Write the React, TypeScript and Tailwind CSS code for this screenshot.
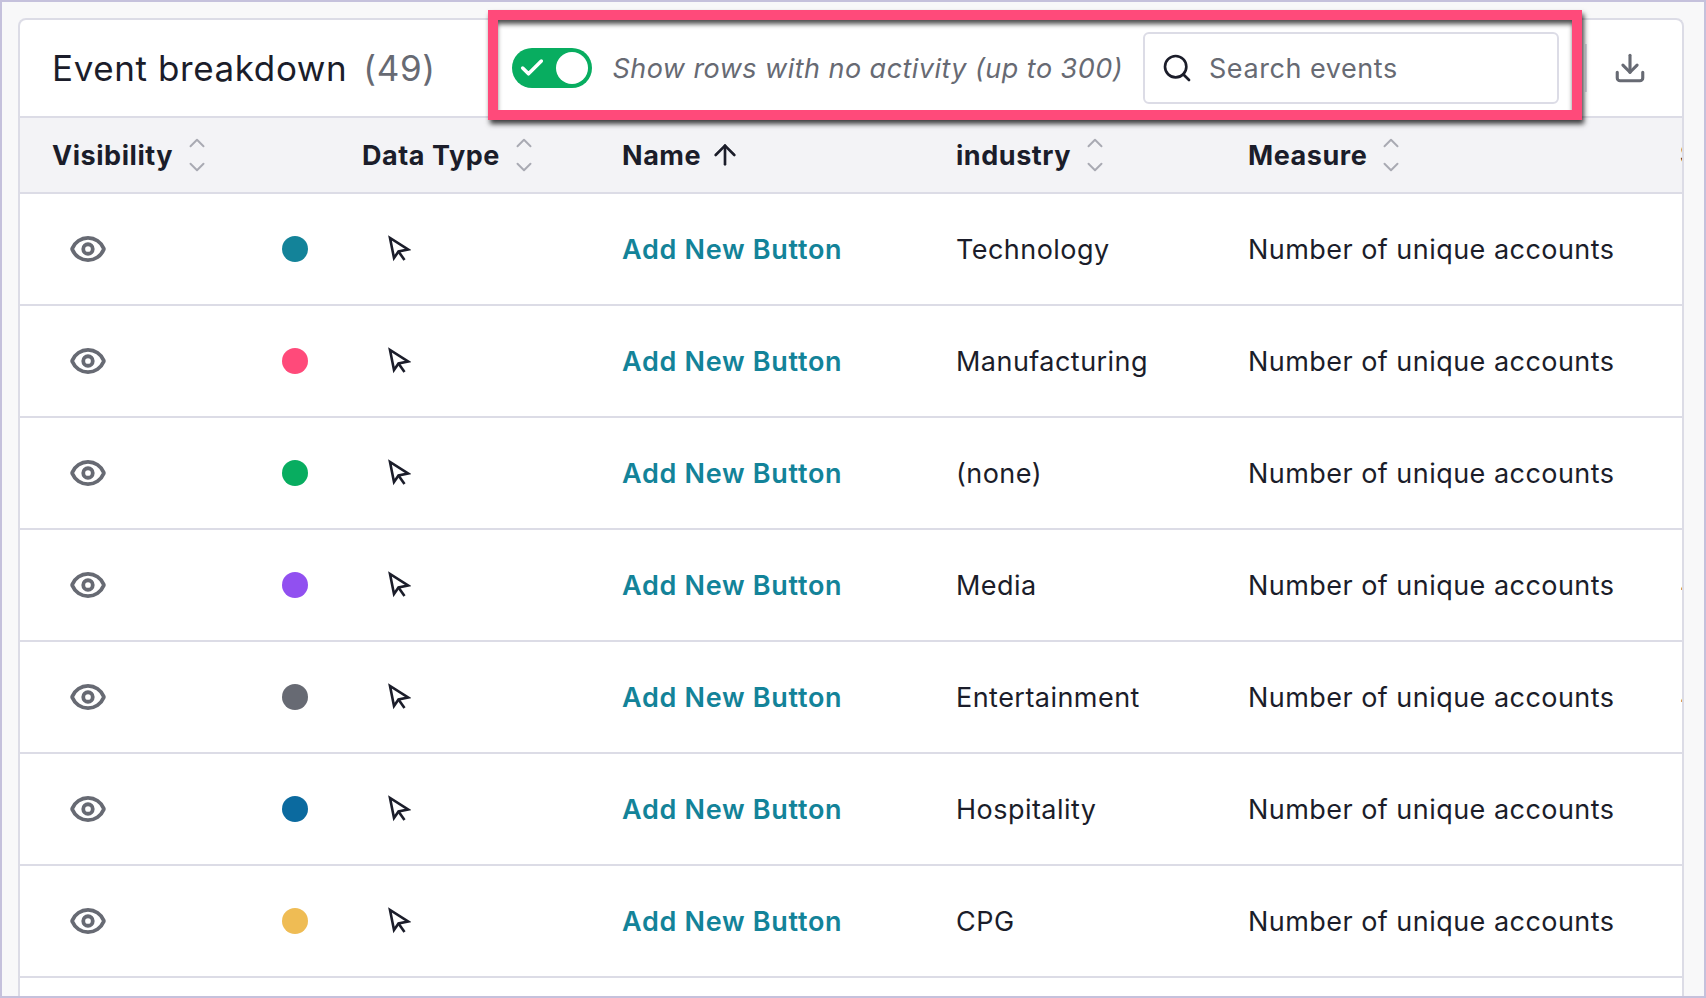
import { ArrowUp, ChevronDown, ChevronUp, Check, Download, Eye, Search } from 'lucide-react';

const rows = [
  { color: 'bg-[#138399]', industry: 'Technology', extra: '' },
  { color: 'bg-[#ff4a7a]', industry: 'Manufacturing', extra: '' },
  { color: 'bg-[#08ad60]', industry: '(none)', extra: '' },
  { color: 'bg-[#9150f0]', industry: 'Media', extra: '4' },
  { color: 'bg-[#676a73]', industry: 'Entertainment', extra: '4' },
  { color: 'bg-[#0b6a9f]', industry: 'Hospitality', extra: '' },
  { color: 'bg-[#efbc54]', industry: 'CPG', extra: '' },
];

const COLS = 'grid grid-cols-[310px_260px_334px_292px_432px_1fr]';

function SortIcon() {
  return (
    <span className="flex flex-col -space-y-[2px] text-[#a9aab3]">
      <ChevronUp size={26} strokeWidth={1.8} />
      <ChevronDown size={26} strokeWidth={1.8} />
    </span>
  );
}

function CursorIcon() {
  return (
    <svg width="24" height="28" viewBox="0 0 24 28" fill="none" stroke="currentColor" strokeWidth="2.6" strokeLinejoin="miter">
      <path d="M3 3 L7 23 L11.5 16.5 L21 14.5 Z" />
      <path d="M11.5 16.5 L17.5 25" />
    </svg>
  );
}

function HeaderCell({ label, children }: { label: string; children?: React.ReactNode }) {
  return (
    <div className="flex items-center gap-[11px] font-bold">
      <span className="pt-[2px]">{label}</span>
      {children}
    </div>
  );
}

export default function App() {
  return (
    <div className="relative flex h-[998px] w-[1706px] flex-col overflow-hidden border-2 border-[#c5c1dc] bg-[#f8f8f9] pl-[16px] pr-[20px] pt-[16px] font-['Inter',sans-serif] text-[#1b1d2a]">
      <div className="flex-1 overflow-hidden rounded-t-[8px] border-2 border-b-0 border-[#dcdce6] bg-white">
        {/* toolbar */}
        <div className="flex h-[98px] items-center border-b-2 border-[#dcdce6] pl-[32px] pr-[35px]">
          <h2 className="text-[35px] tracking-[0.6px]">
            Event breakdown
            <span className="ml-[16px] text-[#676a73]">(49)</span>
          </h2>
          <div className="ml-auto flex items-center">
            <span className="relative mr-[20px] flex h-[40px] w-[80px] shrink-0 items-center rounded-full bg-[#08ad60] px-[6px]">
              <Check size={28} strokeWidth={3} className="text-white" />
              <span className="absolute right-[4px] top-[4px] h-[32px] w-[32px] rounded-full bg-white" />
            </span>
            <span className="mr-[20px] pt-[2px] text-[27px] italic tracking-[0.46px] text-[#676a73]">
              Show rows with no activity (up to 300)
            </span>
            <div className="flex h-[72px] w-[416px] items-center gap-[16px] rounded-[6px] border-2 border-[#dcdce6] pl-[16px] text-[27px] tracking-[0.55px] text-[#676a73]">
              <Search size={32} strokeWidth={2} className="text-[#1b1d2a]" />
              <span className="pt-[2px]">Search events</span>
            </div>
            <div className="ml-[26px] mr-[26px] h-[48px] w-[2px] bg-[#dcdce6]" />
            <Download size={34} strokeWidth={2.2} className="text-[#676a73]" />
          </div>
        </div>

        {/* table header */}
        <div className={`${COLS} h-[76px] items-center border-b-2 border-[#dcdce6] bg-[#f3f3f6] pl-[32px] text-[27px] tracking-[0.55px]`}>
          <HeaderCell label="Visibility"><SortIcon /></HeaderCell>
          <HeaderCell label="Data Type"><SortIcon /></HeaderCell>
          <HeaderCell label="Name"><ArrowUp size={32} strokeWidth={2} className="-ml-[3px]" /></HeaderCell>
          <HeaderCell label="industry"><SortIcon /></HeaderCell>
          <HeaderCell label="Measure"><SortIcon /></HeaderCell>
          <span className="overflow-hidden font-bold">S</span>
        </div>

        {/* rows */}
        {rows.map((row) => (
          <div key={row.industry} className={`${COLS} h-[112px] items-center border-b-2 border-[#dcdce6] pl-[32px] text-[27px] tracking-[0.46px]`}>
            <div className="flex items-center">
              <Eye size={38} strokeWidth={2.4} className="ml-[17px] text-[#676a73]" />
              <span className={`ml-[175px] h-[26px] w-[26px] rounded-full ${row.color}`} />
            </div>
            <div className="pl-[25px]">
              <CursorIcon />
            </div>
            <a className="pt-[2px] font-semibold tracking-[0.7px] text-[#138399]">Add New Button</a>
            <span className="pt-[2px]">{row.industry}</span>
            <span className="pt-[2px]">Number of unique accounts</span>
            <span className="overflow-hidden">{row.extra}</span>
          </div>
        ))}
      </div>

      {/* annotation box over the toolbar */}
      <div className="pointer-events-none absolute left-[486px] top-[8px] h-[110px] w-[1094px] border-[10px] border-[#ff4a7a] shadow-[2px_4px_5px_rgba(0,0,0,0.75),inset_0_5px_5px_-1px_rgba(0,0,0,0.7)]" />
    </div>
  );
}
